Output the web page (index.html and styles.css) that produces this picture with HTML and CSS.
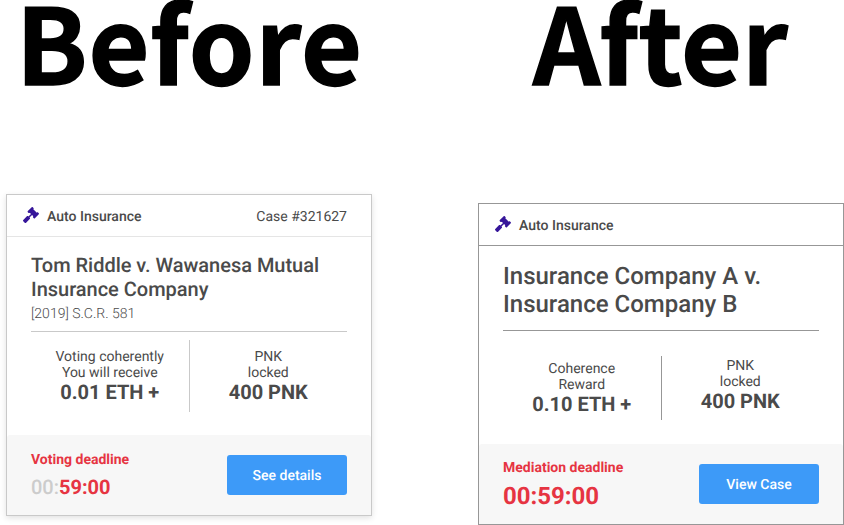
FILE: index.html
```
<!DOCTYPE html>
<html lang="en">
<head>
  <meta charset="UTF-8">
  <title>Case cards</title>
  <link rel="stylesheet" href="styles.css">
</head>
<body>
  <svg class="sprite" width="0" height="0">
    <symbol id="gavel" viewBox="0 0 512 512">
      <path d="M504.971 199.362l-22.627-22.627c-9.373-9.373-24.569-9.373-33.941 0l-5.657 5.657L329.608 69.255l5.657-5.657c9.373-9.373 9.373-24.569 0-33.941L312.638 7.029c-9.373-9.373-24.569-9.373-33.941 0L154.246 131.48c-9.373 9.373-9.373 24.569 0 33.941l22.627 22.627c9.373 9.373 24.569 9.373 33.941 0l5.657-5.657 39.598 39.598-81.04 81.04-5.657-5.657c-12.497-12.497-32.758-12.497-45.255 0L9.373 412.118c-12.497 12.497-12.497 32.758 0 45.255l45.255 45.255c12.497 12.497 32.758 12.497 45.255 0l114.745-114.745c12.497-12.497 12.497-32.758 0-45.255l-5.657-5.657 81.04-81.04 39.598 39.598-5.657 5.657c-9.373 9.373-9.373 24.569 0 33.941l22.627 22.627c9.373 9.373 24.569 9.373 33.941 0l124.451-124.451c9.372-9.372 9.372-24.568 0-33.941z"/>
    </symbol>
  </svg>

  <div class="comparison">
    <section class="column">
      <h1 class="heading heading-before">Before</h1>
      <div class="card card-before">
        <div class="card-header">
          <svg class="icon"><use href="#gavel"/></svg>
          <span class="category">Auto Insurance</span>
          <span class="case-number">Case #321627</span>
        </div>
        <div class="card-body">
          <h2 class="title">Tom Riddle v. Wawanesa Mutual Insurance Company</h2>
          <div class="citation">[2019] S.C.R. 581</div>
          <div class="stats">
            <div class="stat">
              <div>Voting coherently</div>
              <div>You will receive</div>
              <div class="value">0.01 ETH +</div>
            </div>
            <div class="divider"></div>
            <div class="stat">
              <div>PNK</div>
              <div>locked</div>
              <div class="value">400 PNK</div>
            </div>
          </div>
        </div>
        <div class="card-footer">
          <div>
            <div class="deadline-label">Voting deadline</div>
            <div class="countdown"><span class="elapsed">00:</span>59:00</div>
          </div>
          <button class="button">See details</button>
        </div>
      </div>
    </section>

    <section class="column">
      <h1 class="heading heading-after">After</h1>
      <div class="card card-after">
        <div class="card-header">
          <svg class="icon"><use href="#gavel"/></svg>
          <span class="category">Auto Insurance</span>
        </div>
        <div class="card-body">
          <h2 class="title">Insurance Company A v. Insurance Company B</h2>
          <div class="stats">
            <div class="stat reward">
              <div>Coherence</div>
              <div>Reward</div>
              <div class="value">0.10 ETH +</div>
            </div>
            <div class="divider"></div>
            <div class="stat">
              <div>PNK</div>
              <div>locked</div>
              <div class="value">400 PNK</div>
            </div>
          </div>
        </div>
        <div class="card-footer">
          <div>
            <div class="deadline-label">Mediation deadline</div>
            <div class="countdown">00:59:00</div>
          </div>
          <button class="button">View Case</button>
        </div>
      </div>
    </section>
  </div>
</body>
</html>
```

FILE: styles.css
```
* {
  margin: 0;
  padding: 0;
  box-sizing: border-box;
}

body {
  background-color: #fff;
  color: #4a4a4a;
  font-family: Roboto, sans-serif;
  font-size: 14px;
  line-height: 16px;
  text-rendering: geometricPrecision;
  overflow: hidden;
}

.sprite {
  display: block;
}

.comparison {
  display: flex;
  gap: 106px;
  padding-left: 6px;
  height: 525px;
}

.column {
  width: 366px;
  flex-shrink: 0;
}

.heading {
  height: 194px;
  color: #000;
  font-family: "Noto Sans CJK SC", sans-serif;
  font-size: 105px;
  font-weight: 700;
  line-height: 80px;
  letter-spacing: 1px;
  white-space: nowrap;
  -webkit-text-stroke: 1.5px #000;
}

.heading-before {
  padding-left: 10px;
}

/* letters sit closer so the crossbars of f and t join */
.heading-after {
  height: 203px;
  padding-left: 55px;
  letter-spacing: 0.2px;
}

.card {
  display: flex;
  flex-direction: column;
  height: 322px;
  background-color: #fff;
  border: 1px solid #c9c9c9;
}

.card-before {
  box-shadow: 0 2px 6px rgba(0, 0, 0, 0.12);
}

.card-header {
  display: flex;
  align-items: center;
  height: 42px;
  padding: 2px 24px 0 16px;
  border-bottom: 1px solid #e5e5e5;
}

.icon {
  width: 16px;
  height: 16px;
  margin: -3px 8px 0 0;
  fill: #36169a;
}

.category {
  font-weight: 500;
}

.case-number {
  margin-left: auto;
}

.card-body {
  flex: 1;
  padding: 16px 24px 0;
}

.title {
  font-size: 20px;
  font-weight: 500;
  line-height: 24px;
  letter-spacing: -0.02px;
}

.citation {
  margin-top: 5px;
  font-weight: 300;
}

.stats {
  display: flex;
  margin-top: 9px;
  padding-top: 8px;
  border-top: 1px solid #c9c9c9;
}

.stat {
  flex: 1;
  padding-top: 9px;
  text-align: center;
}

.value {
  margin-top: -1px;
  font-size: 20px;
  font-weight: 700;
  line-height: 24px;
}

.divider {
  width: 1px;
  height: 72px;
  background-color: #c9c9c9;
}

.card-footer {
  display: flex;
  align-items: center;
  justify-content: space-between;
  height: 80px;
  padding: 0 24px;
  background-color: #f7f7f7;
  border-radius: 3px 3px 0 0;
}

.deadline-label {
  padding-top: 1px;
  color: #e63442;
  font-weight: 700;
}

.countdown {
  margin-top: 7px;
  color: #e63442;
  font-size: 20px;
  font-weight: 700;
  line-height: 24px;
}

.elapsed {
  color: #ccc;
  font-weight: 500;
}

.button {
  width: 120px;
  height: 40px;
  padding-top: 2px;
  border: none;
  border-radius: 3px;
  background-color: #3d9af8;
  color: #fff;
  font-family: inherit;
  font-size: 14px;
  font-weight: 500;
  text-rendering: inherit;
}

/* revised card: darker lines, larger title and countdown */
.card-after,
.card-after .card-header,
.card-after .stats {
  border-color: #979797;
}

.card-after .title {
  font-size: 24px;
  line-height: 28px;
  letter-spacing: 0;
}

.card-after .stats {
  margin-top: 12px;
  padding-top: 25px;
}

.card-after .stat {
  padding-top: 2px;
}

.card-after .reward {
  padding-top: 5px;
}

.card-after .divider {
  height: 64px;
  background-color: #979797;
}

.card-after .countdown {
  font-size: 24px;
  line-height: 26px;
}
```
